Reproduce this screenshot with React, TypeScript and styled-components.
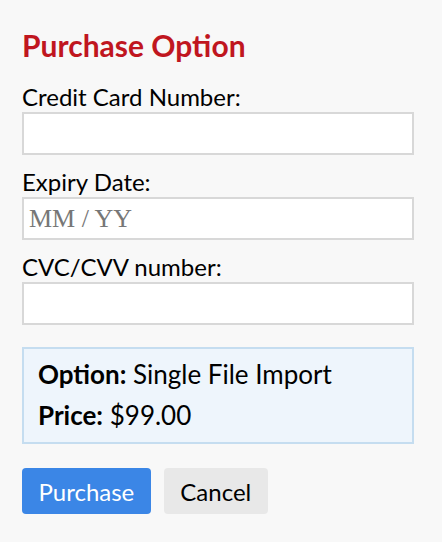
import styled, { createGlobalStyle } from "styled-components";

const GlobalStyle = createGlobalStyle`
  html, body {
    margin: 0;
    padding: 0;
    background: #f8f8f8;
  }
  body {
    font-family: Lato, "Liberation Sans", sans-serif;
    color: #000;
  }
`;

export default function App() {
  return (
    <>
      <GlobalStyle />
      <Page>
        <Title>Purchase Option</Title>
        <Form>
          <Field>
            <Label htmlFor="card">Credit Card Number:</Label>
            <Input id="card" type="text" />
          </Field>
          <Field>
            <Label htmlFor="expiry">Expiry Date:</Label>
            <Input id="expiry" type="text" placeholder="MM / YY" />
          </Field>
          <Field>
            <Label htmlFor="cvc">CVC/CVV number:</Label>
            <Input id="cvc" type="text" />
          </Field>
          <Summary>
            <SummaryLine>
              <strong>Option:</strong> Single File Import
            </SummaryLine>
            <SummaryLine>
              <strong>Price:</strong> $99.00
            </SummaryLine>
          </Summary>
          <Actions>
            <Button $primary type="button">Purchase</Button>
            <Button type="button">Cancel</Button>
          </Actions>
        </Form>
      </Page>
    </>
  );
}

const Page = styled.div`
  padding: 27px 28px 28px 22px;
`;

const Title = styled.h1`
  margin: 0 0 19px;
  font-size: 30px;
  line-height: 36px;
  font-weight: 700;
  color: #c0161f;
`;

const Form = styled.form`
  display: flex;
  flex-direction: column;
`;

const Field = styled.div`
  display: flex;
  flex-direction: column;
  margin-bottom: 12px;
`;

const Label = styled.label`
  font-size: 24px;
  line-height: 30px;
`;

const Input = styled.input`
  box-sizing: border-box;
  width: 100%;
  height: 43px;
  margin: 0;
  padding: 0 5px;
  border: 2px solid #d8d8d8;
  background: #fff;
  font-family: "Liberation Serif", serif;
  font-size: 26px;
  outline: none;

  &::placeholder {
    color: #777;
  }
`;

const Summary = styled.div`
  margin-top: 10px;
  padding: 5px 14px 6px;
  border: 2px solid #c5ddf0;
  background: #eef5fc;
`;

const SummaryLine = styled.p`
  margin: 0;
  font-size: 26px;
  line-height: 41px;

  strong {
    font-weight: 700;
  }
`;

const Actions = styled.div`
  display: flex;
  gap: 13px;
  margin-top: 24px;
`;

const Button = styled.button<{ $primary?: boolean }>`
  height: 46px;
  padding: 0 16.5px;
  border: none;
  border-radius: 4px;
  font-family: Lato, "Liberation Sans", sans-serif;
  font-size: 24px;
  color: ${(p) => (p.$primary ? "#fff" : "#000")};
  background: ${(p) => (p.$primary ? "#3b86e6" : "#e8e8e8")};
  cursor: pointer;
`;
